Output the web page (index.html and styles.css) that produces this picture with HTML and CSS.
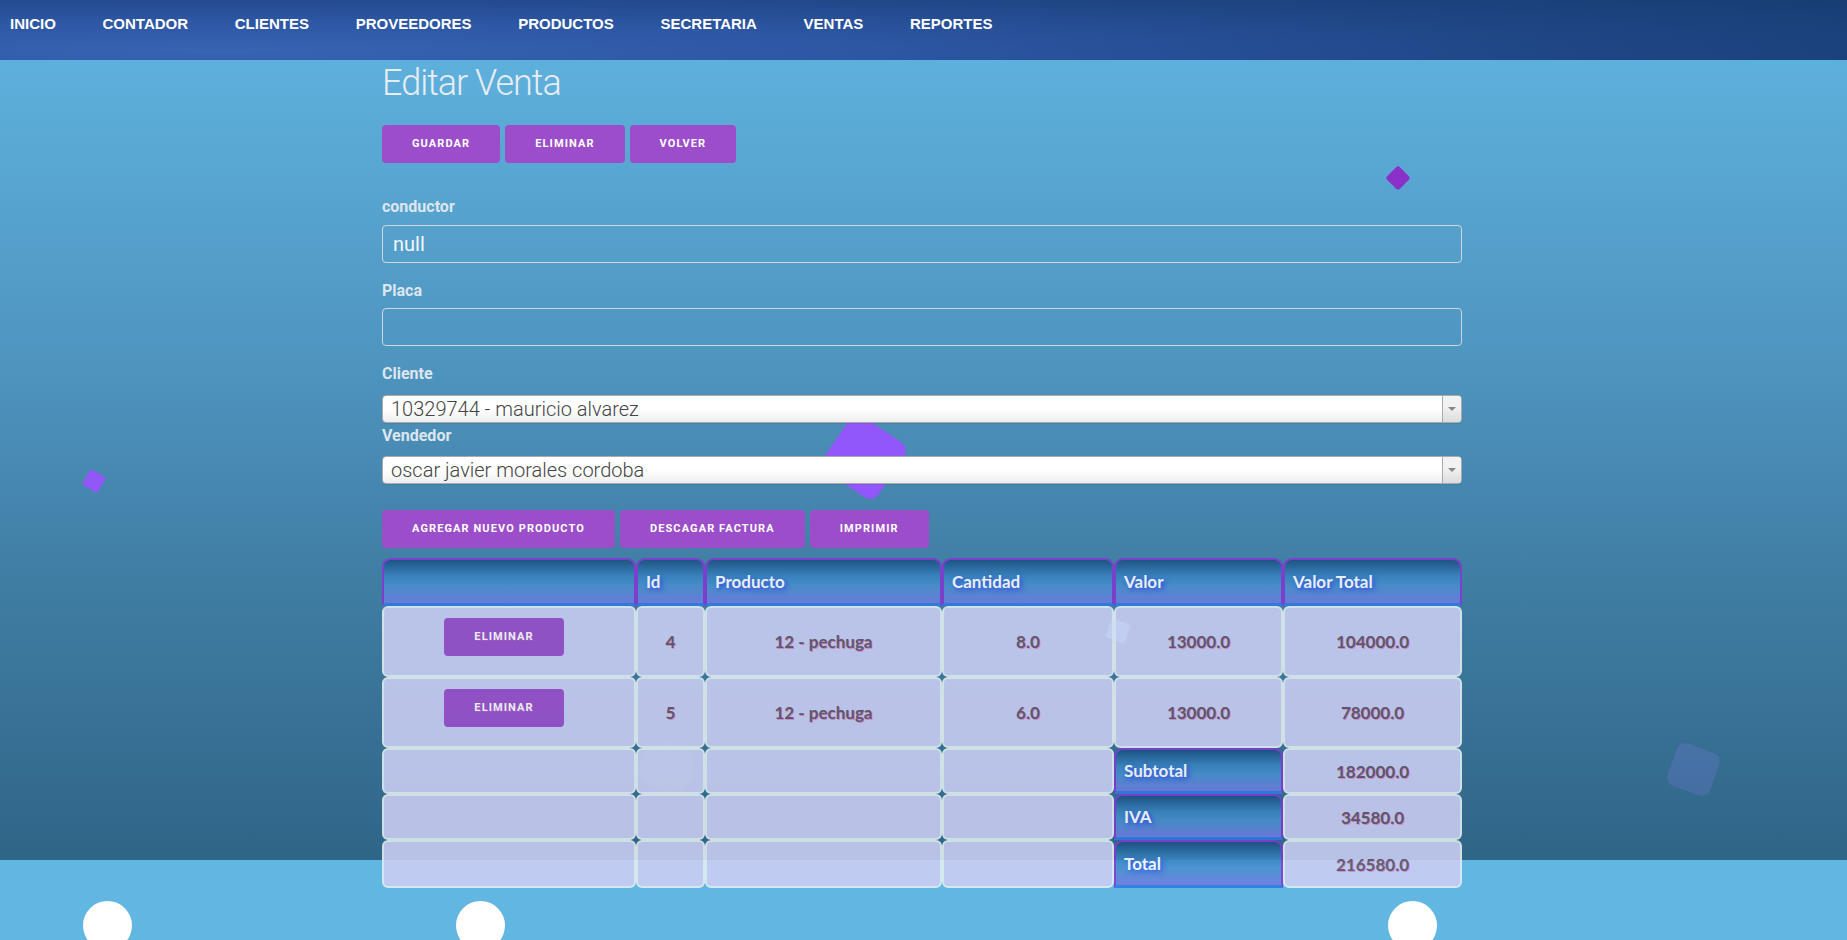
FILE: index.html
```html
<!DOCTYPE html>
<html lang="es">
<head>
<meta charset="utf-8">
<title>Editar Venta</title>
<link rel="stylesheet" href="styles.css">
</head>
<body>
<div class="decor" aria-hidden="true">
  <span class="shape s-diamond-right"></span>
  <span class="shape s-diamond-left"></span>
  <span class="shape s-big"></span>
  <span class="shape s-ghost"></span>
  <span class="shape s-glass"></span>
  <span class="shape s-faint"></span>
  <span class="dot dot-1"></span>
  <span class="dot dot-2"></span>
  <span class="dot dot-3"></span>
</div>

<nav class="topnav">
  <a href="#">INICIO</a>
  <a href="#">CONTADOR</a>
  <a href="#">CLIENTES</a>
  <a href="#">PROVEEDORES</a>
  <a href="#">PRODUCTOS</a>
  <a href="#">SECRETARIA</a>
  <a href="#">VENTAS</a>
  <a href="#">REPORTES</a>
</nav>

<main class="container">
  <h2 class="title">Editar Venta</h2>

  <div class="actions actions-top">
    <button class="btn">Guardar</button>
    <button class="btn">Eliminar</button>
    <button class="btn">Volver</button>
  </div>

  <form class="form">
    <label class="label">conductor</label>
    <input class="input" type="text" value="null">
    <label class="label">Placa</label>
    <input class="input" type="text" value="">
    <label class="label">Cliente</label>
    <div class="select">
      <span class="select-text">10329744 - mauricio alvarez</span>
      <span class="select-arrow"></span>
    </div>
    <label class="label">Vendedor</label>
    <div class="select">
      <span class="select-text">oscar javier morales cordoba</span>
      <span class="select-arrow"></span>
    </div>
  </form>

  <div class="actions actions-table">
    <button class="btn">Agregar nuevo producto</button>
    <button class="btn">Descagar factura</button>
    <button class="btn">Imprimir</button>
  </div>

  <table class="grid">
    <colgroup>
      <col class="c-act"><col class="c-id"><col class="c-prod"><col class="c-cant"><col class="c-val"><col class="c-tot">
    </colgroup>
    <thead>
      <tr class="r-head"><th></th><th>Id</th><th>Producto</th><th>Cantidad</th><th>Valor</th><th>Valor Total</th></tr>
    </thead>
    <tbody>
      <tr class="r-item"><td><button class="btn btn-row">Eliminar</button></td><td>4</td><td>12 - pechuga</td><td>8.0</td><td>13000.0</td><td>104000.0</td></tr>
      <tr class="r-item"><td><button class="btn btn-row">Eliminar</button></td><td>5</td><td>12 - pechuga</td><td>6.0</td><td>13000.0</td><td>78000.0</td></tr>
      <tr class="r-sum"><td></td><td></td><td></td><td></td><th>Subtotal</th><td>182000.0</td></tr>
      <tr class="r-sum"><td></td><td></td><td></td><td></td><th>IVA</th><td>34580.0</td></tr>
      <tr class="r-sum r-last"><td></td><td></td><td></td><td></td><th>Total</th><td>216580.0</td></tr>
    </tbody>
  </table>
</main>
</body>
</html>
```

FILE: styles.css
```css
html, body {
  margin: 0;
  padding: 0;
}

body {
  font-family: Roboto, "Liberation Sans", Arial, sans-serif;
  background-color: #62b6e2;
  background-image: linear-gradient(180deg,
    #5eb0dc 0px, #5eb0dc 60px,
    #4f96c1 350px,
    #417ea5 570px,
    #2f6587 860px,
    #62b6e2 860px, #62b6e2 940px);
  background-repeat: no-repeat;
  background-size: 100% 940px;
  min-height: 940px;
  position: relative;
}

/* ---------- decorative layer ---------- */
.decor {
  position: absolute;
  left: 0;
  top: 0;
  width: 100%;
  height: 940px;
  overflow: hidden;
}

.shape {
  position: absolute;
  display: block;
  z-index: 0;
}

.s-diamond-right {
  left: 1389px;
  top: 169px;
  width: 18px;
  height: 18px;
  border-radius: 3px;
  background: #8b30c9;
  transform: rotate(45deg);
}

.s-diamond-left {
  left: 85px;
  top: 472px;
  width: 18px;
  height: 18px;
  border-radius: 3px;
  background: #9257f7;
  transform: rotate(30deg);
}

.s-big {
  left: 831px;
  top: 424px;
  width: 66px;
  height: 66px;
  border-radius: 10px;
  background: #9257fa;
  transform: rotate(34deg);
}

.s-ghost {
  left: 1671px;
  top: 747px;
  width: 45px;
  height: 45px;
  border-radius: 9px;
  background: rgba(143, 132, 250, 0.2);
  transform: rotate(20deg);
}

.s-glass {
  left: 1108px;
  top: 621px;
  width: 20px;
  height: 20px;
  border-radius: 3px;
  background: rgba(205, 222, 255, 0.4);
  transform: rotate(20deg);
  z-index: 2;
}

.s-faint {
  left: 640px;
  top: 742px;
  width: 54px;
  height: 50px;
  border-radius: 50%;
  background: rgba(255, 255, 255, 0.035);
  z-index: 2;
}

.dot {
  position: absolute;
  top: 901px;
  width: 49px;
  height: 49px;
  border-radius: 50%;
  background: #ffffff;
}

.dot-1 { left: 83px; }
.dot-2 { left: 456px; }
.dot-3 { left: 1388px; }

/* ---------- navbar ---------- */
.topnav {
  position: relative;
  z-index: 1;
  display: flex;
  gap: 46.7px;
  height: 60px;
  box-sizing: border-box;
  padding: 15px 0 0 10px;
  background: radial-gradient(120% 170% at 12% 85%, #3764b3 0%, #2d56a3 30%, #1f4584 62%, #153a6d 100%);
}

.topnav a {
  font-family: "Liberation Sans", Arial, sans-serif;
  font-weight: 700;
  font-size: 15px;
  line-height: 17px;
  color: #ffffff;
  text-decoration: none;
}

/* ---------- main ---------- */
.container {
  position: relative;
  z-index: 1;
  width: 1080px;
  margin-left: calc(50% - 541.5px);
}

.title {
  margin: 0 0 20px;
  padding-top: 1px;
  font-family: Roboto, sans-serif;
  font-weight: 300;
  font-size: 36px;
  line-height: 44px;
  letter-spacing: -1px;
  color: #e7edf3;
}

.actions {
  display: flex;
  gap: 5px;
}

.actions-top {
  margin-bottom: 31px;
}

.actions-table {
  margin-top: 26px;
  margin-bottom: 10px;
}

.btn {
  display: inline-block;
  height: 38px;
  line-height: 38px;
  padding: 0 30px;
  border: 0;
  border-radius: 4px;
  background: #9b4dca;
  color: #ffffff;
  font-family: Roboto, sans-serif;
  font-weight: 700;
  font-size: 11px;
  letter-spacing: 1.1px;
  text-transform: uppercase;
  white-space: nowrap;
  cursor: pointer;
}

/* ---------- form ---------- */
.form {
  margin: 0;
}

.label {
  display: block;
  font-family: Roboto, sans-serif;
  font-weight: 700;
  font-size: 16px;
  line-height: 25.6px;
  color: #dde6ee;
  margin-bottom: 5px;
}

.input {
  display: block;
  width: 100%;
  height: 38px;
  box-sizing: border-box;
  margin: 0 0 15px;
  padding: 6px 10px;
  border: 1px solid #cfd7de;
  border-radius: 4px;
  background: transparent;
  color: #f3f6f9;
  font-family: Roboto, sans-serif;
  font-weight: 400;
  font-size: 20px;
  outline: none;
}

.select {
  display: flex;
  height: 28px;
  box-sizing: border-box;
  margin-top: 8px;
  border: 1px solid #aaaaaa;
  border-radius: 4px;
  background: linear-gradient(to top, #eeeeee 0%, #ffffff 50%);
  box-shadow: 0 1px 1px rgba(0, 0, 0, 0.08);
  overflow: hidden;
}

.select-text {
  flex: 1;
  padding-left: 8px;
  line-height: 26px;
  font-family: Roboto, sans-serif;
  font-weight: 300;
  font-size: 20px;
  color: #444444;
  white-space: nowrap;
  overflow: hidden;
}

.select-arrow {
  position: relative;
  width: 18px;
  border-left: 1px solid #aaaaaa;
  background: linear-gradient(to top, #dcdcdc 0%, #f2f2f2 60%);
}

.select-arrow::after {
  content: "";
  position: absolute;
  left: 5px;
  top: 11px;
  border-left: 4px solid transparent;
  border-right: 4px solid transparent;
  border-top: 4px solid #888888;
}

/* ---------- table ---------- */
.grid {
  width: 1080px;
  table-layout: fixed;
  border-collapse: separate;
  border-spacing: 0;
  opacity: 0.88;
}

.c-act  { width: 254px; }
.c-id   { width: 69px; }
.c-prod { width: 237px; }
.c-cant { width: 172px; }
.c-val  { width: 169px; }
.c-tot  { width: 179px; }

.grid th,
.grid td {
  box-sizing: border-box;
  font-family: Lato, "Open Sans", sans-serif;
  font-weight: 700;
  font-size: 17px;
}

.grid th {
  padding: 0 8px;
  text-align: left;
  color: #ffffff;
  text-shadow: 2px 2px 5px #2b3cf0;
  background: linear-gradient(180deg, #1a4f80 0%, #3984c0 38%, #4a8fcf 62%, #717be1 100%);
  border: 2px solid #8338d2;
  border-bottom: 3px solid #2f7ae2;
  border-radius: 9px 9px 0 0;
}

.grid td {
  padding: 0;
  text-align: center;
  color: #5f5666;
  text-shadow: 1px 1px 0 rgba(236, 110, 186, 0.75);
  background: #cccff3;
  border: 2px solid #e4f1f1;
  border-radius: 6px;
}

.r-head { height: 48px; }
.r-item { height: 71px; }
.r-sum  { height: 46px; }
.r-last { height: 48px; }

.btn-row {
  margin: 0 10px 10px 0;
  vertical-align: middle;
  text-shadow: 1px 1px 0 rgba(236, 110, 186, 0.35);
}
```
